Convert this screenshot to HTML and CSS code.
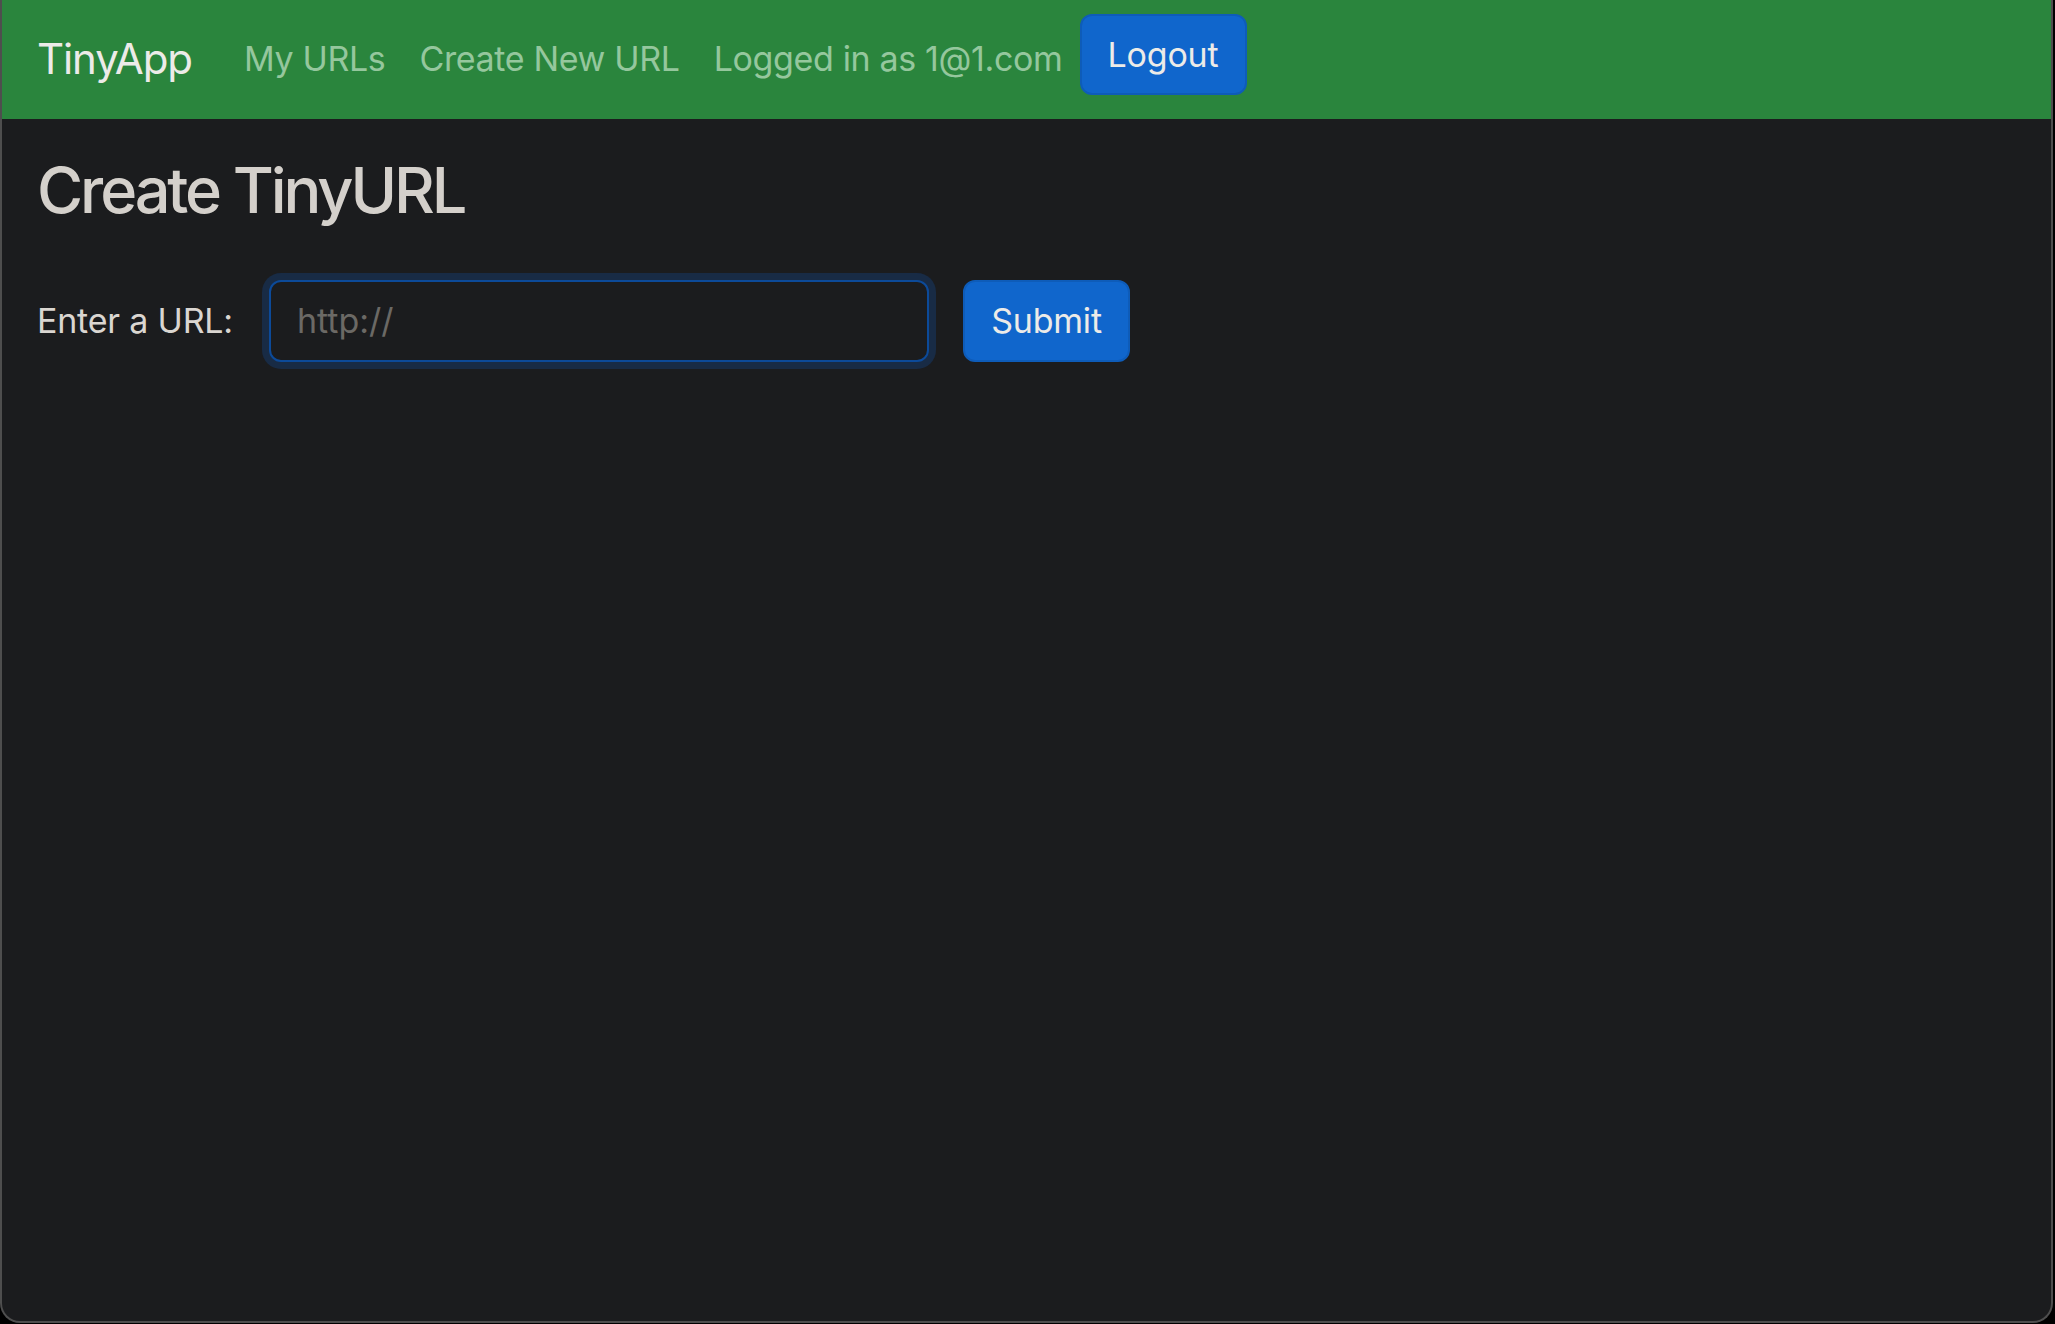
FILE: index.html
```html
<!DOCTYPE html>
<html lang="en">
<head>
<meta charset="utf-8">
<title>TinyApp - Create TinyURL</title>
<link rel="stylesheet" href="styles.css">
</head>
<body>
<div class="window">
  <nav class="navbar">
    <a class="brand" href="#">TinyApp</a>
    <a class="nav-link" href="#">My URLs</a>
    <a class="nav-link" href="#">Create New URL</a>
    <span class="nav-link">Logged in as 1@1.com</span>
    <button class="btn btn-logout" type="button">Logout</button>
  </nav>
  <main class="main">
    <h1 class="title">Create TinyURL</h1>
    <form class="url-form">
      <label class="label" for="longURL">Enter a URL:</label>
      <input class="input" id="longURL" type="text" placeholder="http://">
      <button class="btn btn-submit" type="button">Submit</button>
    </form>
  </main>
</div>
</body>
</html>
```
FILE: styles.css
```css
* { box-sizing: border-box; }

html, body {
  margin: 0;
  padding: 0;
  background: #000;
}

body {
  font-family: Inter, "Noto Sans", sans-serif;
  width: 2055px;
  height: 1324px;
  overflow: hidden;
}

.window {
  width: 2053px;
  height: 1323px;
  background: #1b1c1e;
  border-left: 2px solid #4e4e4e;
  border-right: 2px solid #4e4e4e;
  border-bottom: 2px solid #4e4e4e;
  border-radius: 0 0 20px 20px;
  overflow: hidden;
  display: flex;
  flex-direction: column;
}

.navbar {
  height: 119px;
  background: #2a853d;
  display: flex;
  align-items: center;
  padding-left: 35px;
}

.brand {
  color: #ecebe8;
  font-size: 42px;
  text-decoration: none;
  margin-right: 35px;
  letter-spacing: -1.1px;
  margin-top: -2px;
}

.nav-link {
  color: #95c79d;
  font-size: 34px;
  text-decoration: none;
  padding: 0 17px;
  letter-spacing: -0.35px;
  margin-top: -2px;
}

.btn {
  font-family: inherit;
  font-size: 34px;
  color: #ecebe8;
  background: #1066cc;
  border: 2px solid #0e5cb9;
  border-radius: 12px;
  height: 81px;
  width: 167px;
  padding: 0;
  letter-spacing: -0.2px;
}

.btn-logout {
  margin-top: -11px;
}

.main {
  padding-left: 35px;
}

.title {
  margin: 34px 0 51px;
  font-size: 63px;
  font-weight: 500;
  line-height: 1.2;
  color: #d4d0cb;
  letter-spacing: -3.1px;
}

.url-form {
  display: flex;
  align-items: center;
}

.label {
  color: #dad6d1;
  font-size: 34px;
  margin-right: 36px;
  letter-spacing: -0.2px;
}

.input {
  width: 660px;
  height: 82px;
  background: #1b1c1e;
  border: 2px solid #0c4a99;
  border-radius: 12px;
  box-shadow: 0 0 0 7px #182b45;
  padding: 0 26px;
  font-family: inherit;
  font-size: 34px;
  color: #dad6d1;
  outline: none;
  margin-right: 34px;
}

.input::placeholder {
  color: #6b6965;
}

.btn-submit {
  height: 82px;
}
```
